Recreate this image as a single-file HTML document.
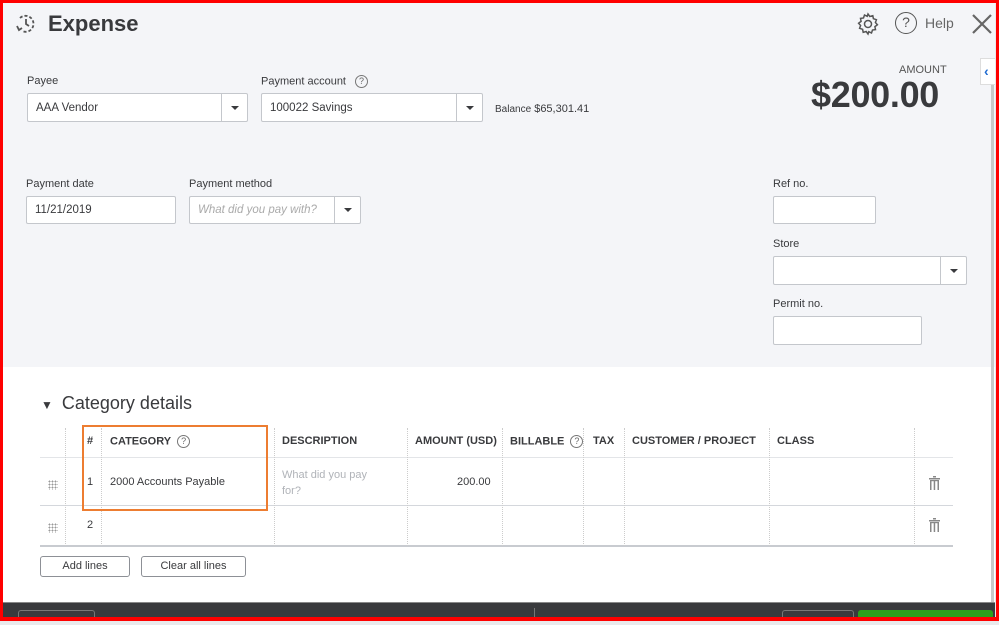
<!DOCTYPE html>
<html><head><style>
*{margin:0;padding:0;box-sizing:border-box}
body{width:999px;height:625px;position:relative;overflow:hidden;background:#e9eaec;font-family:"Liberation Sans",sans-serif;color:#393a3d}
.a{position:absolute}
.top{left:3px;top:3px;width:992px;height:364px;background:#f4f5f8}
.bot{left:3px;top:367px;width:992px;height:236px;background:#fff}
.foot{left:3px;top:602px;width:992px;height:15px;background:#393a3d;border-top:1px solid #888}
.lbl{font-size:11px;color:#393a3d}
.inp{background:#fff;border:1px solid #c4c7cc;border-radius:2px;font-size:11.5px;padding:0 8px;display:flex;align-items:center}
.dd{position:absolute;right:0;top:0;bottom:0;width:26px;border-left:1px solid #c4c7cc;display:flex;align-items:center;justify-content:center}
.dd:after{content:"";border-left:4px solid transparent;border-right:4px solid transparent;border-top:4px solid #393a3d}
.th{font-size:11px;font-weight:bold;color:#393a3d;top:435px}
.vl{width:0;border-left:1px dotted #ccc}
.hl{height:0;left:40px;width:913px}
.q{display:inline-block;width:13px;height:13px;border:1px solid #777;border-radius:50%;font-size:9px;text-align:center;line-height:11px;color:#666;font-weight:normal;vertical-align:middle;margin-left:6px}
.btn{border:1px solid #8d9096;border-radius:3px;background:#fff;font-size:11px;text-align:center;line-height:19px;height:21px;top:556px}
.dots{width:10px;height:10px;background-image:radial-gradient(circle,#999 0.9px,transparent 1px);background-size:3px 3px}
</style></head><body>
<div class="a top"></div>
<div class="a bot"></div>
<div class="a" style="left:991px;top:83px;width:3px;height:520px;background:#c8c8c8"></div>
<div class="a" style="left:980px;top:58px;width:15px;height:27px;background:#fff;border:1px solid #ddd;border-right:none;color:#1f6bd0;font-size:14px;font-weight:bold;line-height:25px;padding-left:3px">‹</div>

<svg class="a" style="left:14px;top:12px" width="24" height="24" viewBox="0 0 24 24" fill="none" stroke="#555" stroke-width="1.8"><path d="M6 6A8 8 0 1 1 8 19" stroke-dasharray="3 2"/><path d="M12 7v5l3 2"/><path d="M3 14l2 4 3-2"/></svg>
<div class="a" style="left:48px;top:11px;font-size:22px;font-weight:bold;color:#393a3d">Expense</div>

<svg class="a" style="left:856px;top:12px" width="24" height="24" viewBox="0 0 24 24" fill="none" stroke="#555" stroke-width="1.5"><circle cx="12" cy="12" r="3.5"/><path d="M12 2l1.8 2.5 3-.8.6 3 3 1-1 2.8 2 2.3-2.5 1.8.6 3-3 .4-1 3-2.7-1.3L12 22l-1.8-2.5-3 .8-.6-3-3-1 1-2.8-2-2.3 2.5-1.8-.6-3 3-.4 1-3 2.7 1.3z"/></svg>
<div class="a" style="left:895px;top:12px;width:22px;height:22px;border:1.6px solid #555;border-radius:50%;text-align:center;font-size:14px;line-height:19px;color:#555">?</div>
<div class="a" style="left:925px;top:15px;font-size:14px;color:#666">Help</div>
<svg class="a" style="left:971px;top:13px" width="22" height="22" viewBox="0 0 22 22" stroke="#666" stroke-width="2.2"><path d="M2 2L20 20M20 2L2 20"/></svg>

<div class="a" style="left:899px;top:64px;font-size:11px;color:#555">AMOUNT</div>
<div class="a" style="left:811px;top:74px;font-size:36px;font-weight:bold;color:#393a3d;letter-spacing:-0.3px">$200.00</div>

<div class="a lbl" style="left:27px;top:75px">Payee</div>
<div class="a inp" style="left:27px;top:93px;width:221px;height:29px">AAA Vendor<div class="dd"></div></div>
<div class="a lbl" style="left:261px;top:75px">Payment account <span class="q">?</span></div>
<div class="a inp" style="left:261px;top:93px;width:222px;height:29px">100022 Savings<div class="dd"></div></div>
<div class="a" style="left:495px;top:103px;font-size:11px;color:#393a3d"><span style="font-size:10px">Balance</span> $65,301.41</div>

<div class="a lbl" style="left:26px;top:178px">Payment date</div>
<div class="a inp" style="left:26px;top:196px;width:150px;height:28px">11/21/2019</div>
<div class="a lbl" style="left:189px;top:178px">Payment method</div>
<div class="a inp" style="left:189px;top:196px;width:172px;height:28px;color:#aaa;font-style:italic">What did you pay with?<div class="dd"></div></div>

<div class="a lbl" style="left:773px;top:178px">Ref no.</div>
<div class="a inp" style="left:773px;top:196px;width:103px;height:28px"></div>
<div class="a lbl" style="left:773px;top:238px">Store</div>
<div class="a inp" style="left:773px;top:256px;width:194px;height:29px"><div class="dd"></div></div>
<div class="a lbl" style="left:773px;top:298px">Permit no.</div>
<div class="a inp" style="left:773px;top:316px;width:149px;height:29px"></div>

<div class="a" style="left:41px;top:393px;font-size:18px;color:#393a3d"><span style="font-size:12px;margin-right:9px">▼</span>Category details</div>

<div class="a hl" style="top:457px;border-top:1px solid #e3e5e8"></div>
<div class="a hl" style="top:505px;border-top:1px solid #d4d7dc"></div>
<div class="a hl" style="top:545px;border-top:2px solid #c8cbd0"></div>
<div class="a vl" style="left:65px;top:428px;height:118px"></div>
<div class="a vl" style="left:101px;top:428px;height:118px"></div>
<div class="a vl" style="left:274px;top:428px;height:118px"></div>
<div class="a vl" style="left:407px;top:428px;height:118px"></div>
<div class="a vl" style="left:502px;top:428px;height:118px"></div>
<div class="a vl" style="left:583px;top:428px;height:118px"></div>
<div class="a vl" style="left:624px;top:428px;height:118px"></div>
<div class="a vl" style="left:769px;top:428px;height:118px"></div>
<div class="a vl" style="left:914px;top:428px;height:118px"></div>

<div class="a th" style="left:87px">#</div>
<div class="a th" style="left:110px">CATEGORY<span class="q">?</span></div>
<div class="a th" style="left:282px">DESCRIPTION</div>
<div class="a th" style="left:415px">AMOUNT (USD)</div>
<div class="a th" style="left:510px">BILLABLE<span class="q">?</span></div>
<div class="a th" style="left:593px">TAX</div>
<div class="a th" style="left:632px">CUSTOMER / PROJECT</div>
<div class="a th" style="left:777px">CLASS</div>

<div class="a dots" style="left:48px;top:480px"></div>
<div class="a dots" style="left:48px;top:523px"></div>
<div class="a" style="left:87px;top:476px;font-size:11px">1</div>
<div class="a" style="left:87px;top:519px;font-size:11px">2</div>
<div class="a" style="left:110px;top:476px;font-size:11px">2000 Accounts Payable</div>
<div class="a" style="left:282px;top:467px;font-size:11px;color:#b0b3b8;line-height:16px">What did you pay<br>for?</div>
<div class="a" style="left:457px;top:476px;font-size:11px">200.00</div>

<svg class="a" style="left:929px;top:476px" width="11" height="14" viewBox="0 0 11 14" fill="#888"><rect x="0" y="2" width="11" height="1.5"/><rect x="4" y="0" width="3" height="1.5"/><rect x="1" y="5" width="1.5" height="9"/><rect x="4.7" y="5" width="1.5" height="9"/><rect x="8.5" y="5" width="1.5" height="9"/><rect x="1" y="4" width="9" height="1.2"/></svg>
<svg class="a" style="left:929px;top:518px" width="11" height="14" viewBox="0 0 11 14" fill="#888"><rect x="0" y="2" width="11" height="1.5"/><rect x="4" y="0" width="3" height="1.5"/><rect x="1" y="5" width="1.5" height="9"/><rect x="4.7" y="5" width="1.5" height="9"/><rect x="8.5" y="5" width="1.5" height="9"/><rect x="1" y="4" width="9" height="1.2"/></svg>

<div class="a" style="left:82px;top:425px;width:186px;height:86px;border:2px solid #ed7d31"></div>

<div class="a btn" style="left:40px;width:90px">Add lines</div>
<div class="a btn" style="left:141px;width:105px">Clear all lines</div>

<div class="a foot"></div>
<div class="a" style="left:18px;top:610px;width:77px;height:8px;border:1px solid #777;border-bottom:none;border-radius:3px 3px 0 0"></div>
<div class="a" style="left:534px;top:608px;width:1px;height:9px;background:#777"></div>
<div class="a" style="left:782px;top:610px;width:72px;height:8px;border:1px solid #777;border-bottom:none;border-radius:3px 3px 0 0"></div>
<div class="a" style="left:858px;top:610px;width:135px;height:8px;background:#2ca01c;border-radius:3px 3px 0 0"></div>

<div class="a" style="left:0;top:0;width:999px;height:621px;border:3px solid #f00;border-bottom-width:4px"></div>
</body></html>
